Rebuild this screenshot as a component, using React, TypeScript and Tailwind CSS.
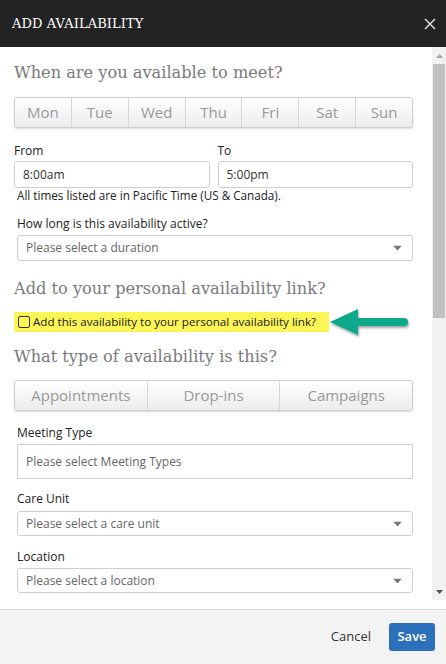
import React from "react";

const sans = { fontFamily: '"Open Sans", "Noto Sans", sans-serif' };
const serif = { fontFamily: '"DejaVu Serif", "Liberation Serif", serif' };

function Caret() {
  return (
    <svg width="9" height="5" viewBox="0 0 9 5" className="absolute right-[10px] top-1/2 -translate-y-1/2">
      <path d="M0 0 L9 0 L4.5 5 Z" fill="#777" />
    </svg>
  );
}

function Select({ text, h }: { text: string; h: string }) {
  return (
    <div className={`relative flex items-center rounded-[3px] border border-[#cfcfcf] bg-white pl-[8px] text-[12px] text-[#666] ${h}`}>
      {text}
      <Caret />
    </div>
  );
}

function Label({ children, cls = "" }: { children: React.ReactNode; cls?: string }) {
  return <div className={`text-[12px] leading-[16px] text-[#222] ${cls}`}>{children}</div>;
}

function BtnGroup({ items, h }: { items: string[]; h: string }) {
  return (
    <div className={`flex rounded-[3px] border border-[#cfcfcf] shadow-[0_1px_2px_rgba(0,0,0,0.15)] bg-gradient-to-b from-white to-[#ececec] ${h}`}>
      {items.map((d, i) => (
        <div
          key={d}
          className={`flex flex-1 items-center justify-center text-[#999] ${i > 0 ? "border-l border-[#d6d6d6]" : ""}`}
        >
          {d}
        </div>
      ))}
    </div>
  );
}

export default function App() {
  return (
    <div className="flex h-[664px] w-[446px] flex-col overflow-hidden bg-white" style={sans}>
      <div className="flex h-[47px] shrink-0 items-center justify-between bg-[#232323] pl-[12px] pr-[8px]">
        <div className="text-[13px] tracking-[0.1px] text-white" style={serif}>ADD AVAILABILITY</div>
        <svg width="12" height="12" viewBox="0 0 12 12" className="mr-[2px]">
          <path d="M1 1 L11 11 M11 1 L1 11" stroke="#e6e6e6" strokeWidth="1.4" />
        </svg>
      </div>
      <div className="flex min-h-0 flex-1">
        <div className="relative flex-1 pl-[14px] pr-[19px] pt-[14px]">
          <h2 className="text-[16.2px] leading-[24px] text-[#7a7a7a]" style={serif}>When are you available to meet?</h2>
          <div className="mt-[12px] text-[15px]">
            <BtnGroup items={["Mon", "Tue", "Wed", "Thu", "Fri", "Sat", "Sun"]} h="h-[31px]" />
          </div>
          <div className="mt-[15px] flex gap-[8px]">
            <div className="flex-1">
              <Label>From</Label>
              <div className="mt-[2px] flex h-[27px] items-center rounded-[3px] border border-[#cfcfcf] pl-[8px] text-[12px] text-[#333]">8:00am</div>
            </div>
            <div className="flex-1">
              <Label>To</Label>
              <div className="mt-[2px] flex h-[27px] items-center rounded-[3px] border border-[#cfcfcf] pl-[8px] text-[12px] text-[#333]">5:00pm</div>
            </div>
          </div>
          <div className="ml-[3px] text-[11.7px] leading-[14px] text-[#222]">All times listed are in Pacific Time (US &amp; Canada).</div>
          <Label cls="mt-[14px] ml-[3px]">How long is this availability active?</Label>
          <div className="mt-[3px] ml-[3px]">
            <Select text="Please select a duration" h="h-[26px]" />
          </div>
          <h2 className="mt-[16px] text-[16.2px] leading-[24px] text-[#7a7a7a]" style={serif}>Add to your personal availability link?</h2>
          <div className="relative mt-[11px] flex">
            <div className="flex h-[20px] w-[315px] items-center gap-[3px] bg-[#fbf556] pl-[4px] text-[11.6px] text-[#222]">
              <span className="inline-block h-[12px] w-[12px] rounded-[2px] border border-[#333] bg-transparent" />
              <span>Add this availability to your personal availability link?</span>
            </div>
            <svg width="84" height="34" viewBox="0 0 84 34" className="absolute left-[314px] top-[-6px]">
              <defs>
                <filter id="sh" x="-20%" y="-30%" width="140%" height="170%">
                  <feDropShadow dx="1" dy="2" stdDeviation="1.2" floodColor="#000" floodOpacity="0.35" />
                </filter>
              </defs>
              <g filter="url(#sh)">
                <path d="M2 16 L30 3 L30 12 L76 12 Q80 12 80 16 Q80 20 76 20 L30 20 L30 29 Z" fill="#08a98a" />
              </g>
            </svg>
          </div>
          <h2 className="mt-[13px] text-[16.2px] leading-[24px] text-[#7a7a7a]" style={serif}>What type of availability is this?</h2>
          <div className="mt-[11px] text-[15px]">
            <BtnGroup items={["Appointments", "Drop-ins", "Campaigns"]} h="h-[31px]" />
          </div>
          <Label cls="mt-[14px] ml-[3px]">Meeting Type</Label>
          <div className="ml-[3px] mt-[3px] flex h-[35px] items-center border border-[#cfcfcf] pl-[8px] text-[12px] text-[#666]">Please select Meeting Types</div>
          <Label cls="mt-[12px] ml-[3px]">Care Unit</Label>
          <div className="mt-[4px] ml-[3px]">
            <Select text="Please select a care unit" h="h-[25px]" />
          </div>
          <Label cls="mt-[13px] ml-[3px]">Location</Label>
          <div className="mt-[3px] ml-[3px]">
            <Select text="Please select a location" h="h-[25px]" />
          </div>
        </div>
        <div className="flex h-[553px] w-[14px] shrink-0 flex-col bg-[#f1f1f1]">
          <div className="flex h-[17px] items-center justify-center">
            <svg width="7" height="4" viewBox="0 0 7 4"><path d="M0 4 L3.5 0 L7 4 Z" fill="#a3a3a3" /></svg>
          </div>
          <div className="ml-[1px] h-[254px] w-[12px] bg-[#c1c1c1]" />
          <div className="flex-1" />
          <div className="flex h-[17px] items-center justify-center">
            <svg width="7" height="4" viewBox="0 0 7 4"><path d="M0 0 L3.5 4 L7 0 Z" fill="#505050" /></svg>
          </div>
        </div>
      </div>
      <div className="flex h-[55px] shrink-0 items-center justify-end gap-[18px] border-t border-[#dcdcdc] bg-[#f3f3f3] pr-[11px]">
        <span className="text-[13px] text-[#333]">Cancel</span>
        <div className="flex h-[28px] w-[46px] items-center justify-center rounded-[3px] bg-[#2c6fba] text-[13px] font-semibold text-white">Save</div>
      </div>
    </div>
  );
}
